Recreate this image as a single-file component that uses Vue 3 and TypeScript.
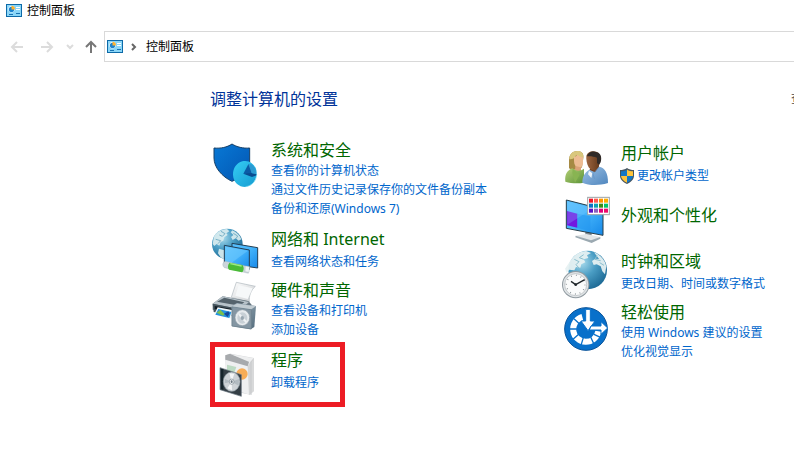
<script setup lang="ts">
interface Category {
  id: string
  title: string
  links: string[]
  view: string
  shielded?: boolean
  marked?: boolean
}

const columns: Category[][] = [
  [
    { id: 'security', title: '系统和安全', view: '15 12 168 168', links: ['查看你的计算机状态', '通过文件历史记录保存你的文件备份副本', '备份和还原(Windows 7)'] },
    { id: 'network', title: '网络和 Internet', view: '15 18 168 168', links: ['查看网络状态和任务'] },
    { id: 'hardware', title: '硬件和声音', view: '15 3 168 168', links: ['查看设备和打印机', '添加设备'] },
    { id: 'programs', title: '程序', view: '15 39 168 168', links: ['卸载程序'], marked: true },
  ],
  [
    { id: 'users', title: '用户帐户', view: '15 6 168 168', links: ['更改帐户类型'], shielded: true },
    { id: 'appearance', title: '外观和个性化', view: '15 9 168 168', links: [] },
    { id: 'clock', title: '时钟和区域', view: '15 6 168 168', links: ['更改日期、时间或数字格式'] },
    { id: 'access', title: '轻松使用', view: '15 3 168 168', links: ['使用 Windows 建议的设置', '优化视觉显示'] },
  ],
]

const swatches = ['#f01425', '#ff5a4f', '#ff9500', '#ffad00', '#0b72c4', '#0aa1b5', '#3c8c16', '#00c46c', '#5a10c8', '#8b62bd', '#e0007c', '#ee0a68']
</script>

<template>
  <div class="window">
    <svg class="defs" aria-hidden="true">
      <defs>
        <symbol id="panel" viewBox="0 0 16 13">
          <rect width="16" height="13" fill="#0d6aa8" />
          <rect x="1" y="1" width="14" height="11" fill="#8ad6f8" />
          <circle cx="5.5" cy="5.2" r="3.1" fill="#fff" />
          <circle cx="5.5" cy="5.4" r="2.6" fill="#1b83cf" />
          <path d="M5.5 5.4V1.8a3.4 3.4 0 0 1 3.4 3.6z" fill="#ffb22e" />
          <path d="M10 3.5h4M10 5.5h4" stroke="#fff" />
          <path d="M3 10.5h4M10 9.5h4" stroke="#1872b2" />
        </symbol>
        <radialGradient id="ocean" cx=".35" cy=".3" r=".8">
          <stop offset="0" stop-color="#aadced" />
          <stop offset=".45" stop-color="#4a9dc4" />
          <stop offset="1" stop-color="#17638f" />
        </radialGradient>
        <linearGradient id="screen" x1="0" y1="0" x2="1" y2="1">
          <stop offset="0" stop-color="#5ac2ff" />
          <stop offset=".5" stop-color="#42b2fa" />
          <stop offset="1" stop-color="#1688e8" />
        </linearGradient>
        <linearGradient id="shield" x1="0" y1="0" x2="1" y2="1">
          <stop offset="0" stop-color="#0879d5" />
          <stop offset="1" stop-color="#0355b2" />
        </linearGradient>
        <linearGradient id="cyan" x1="0" y1="0" x2="1" y2="1">
          <stop offset="0" stop-color="#35cdf5" />
          <stop offset="1" stop-color="#159bd0" />
        </linearGradient>
        <linearGradient id="steel" x1="0" y1="0" x2="1" y2="1">
          <stop offset="0" stop-color="#a4b5c0" />
          <stop offset="1" stop-color="#536b7c" />
        </linearGradient>
        <linearGradient id="paper" x1="0" y1="0" x2="1" y2="1">
          <stop offset="0" stop-color="#ffffff" />
          <stop offset="1" stop-color="#c9cccf" />
        </linearGradient>
        <linearGradient id="green" x1="0" y1="0" x2="1" y2="1">
          <stop offset="0" stop-color="#b4cf76" />
          <stop offset="1" stop-color="#5c9438" />
        </linearGradient>
        <linearGradient id="denim" x1="0" y1="0" x2="1" y2="1">
          <stop offset="0" stop-color="#9bc0e4" />
          <stop offset="1" stop-color="#4f86be" />
        </linearGradient>
        <linearGradient id="skin" x1="0" y1="0" x2="1" y2="0">
          <stop offset="0" stop-color="#9d6641" />
          <stop offset="1" stop-color="#613618" />
        </linearGradient>
      </defs>
    </svg>

    <header class="titlebar">
      <svg class="panel-icon" aria-hidden="true"><use href="#panel" /></svg>
      <span>控制面板</span>
    </header>

    <nav class="toolbar">
      <div class="arrows">
        <button class="arrow" type="button" disabled aria-label="后退">
          <svg viewBox="0 0 14 14"><path d="M13 7H2M7 2 2 7l5 5" /></svg>
        </button>
        <button class="arrow" type="button" disabled aria-label="前进">
          <svg viewBox="0 0 14 14"><path d="M1 7h11M7 2l5 5-5 5" /></svg>
        </button>
        <button class="recent" type="button" disabled aria-label="最近">
          <svg viewBox="0 0 8 8"><path d="m1 2 3 3 3-3" /></svg>
        </button>
        <button class="up" type="button" aria-label="向上">
          <svg viewBox="0 0 14 14"><path d="M7 13V2M2 7l5-5 5 5" /></svg>
        </button>
      </div>
      <div class="address">
        <svg class="panel-icon" aria-hidden="true"><use href="#panel" /></svg>
        <svg class="separator" viewBox="0 0 8 8" aria-hidden="true"><path d="m2 1 3 3-3 3" /></svg>
        <a class="crumb" href="#">控制面板</a>
      </div>
    </nav>

    <main>
      <div class="heading">
        <h1>调整计算机的设置</h1>
        <span class="view-by">查看方式</span>
      </div>
      <div class="columns">
        <ul v-for="(column, index) in columns" :key="index" class="column">
          <li
            v-for="item in column"
            :key="item.id"
            class="category"
            :class="{ single: item.links.length === 1, solo: item.links.length === 0, marked: item.marked }"
          >
            <svg class="icon" :viewBox="item.view" aria-hidden="true">
              <g v-if="item.id === 'security'">
                <path d="M81 27c14 9 34 14 53 12v44c0 25-23 43-53 56-30-14-54-42-54-70V39c20 2 39-2 54-12z" fill="url(#shield)" stroke="#173f66" stroke-width="3" />
                <path d="M112 79c20-6 42 10 43 34 1 23-15 41-34 43-20 0-36-15-37-37 0-20 11-35 28-40z" fill="url(#cyan)" />
                <path d="m130 88-15 28 25 2V92z" fill="#0a5ba6" />
                <path d="m130 88 10 26 13 3c0-12-5-23-13-29z" fill="#2b9ad2" />
                <path d="m115 116 23-2 17 4v3l-14 5z" fill="#084c91" />
                <path d="M121 155c18-2 33-15 34-37" fill="none" stroke="#78dcf3" stroke-width="2" />
              </g>

              <g v-else-if="item.id === 'network'">
                <circle cx="67" cy="66" r="46" fill="url(#ocean)" />
                <path d="M27 44c8-14 22-21 39-23l7 7-9 6 4 5-10 7-3 10-8 4-4 11-8-5-7 6-5-6 2-12zM42 80l16 5 7 10-8 17-10-6-8-12zM82 25c14 6 22 14 27 27l-8 4-9-7-9 5-5-9 7-6-8-8z" fill="#dcedf0" opacity=".9" />
                <path d="m48 28 12 7-8 8-9-4M32 52l15 4-8 9M85 34l13 8-5 8" fill="none" stroke="#79b1c6" stroke-width="3" />
                <path d="m81 64 77 13v61l-77-11z" fill="url(#screen)" stroke="#223d52" stroke-width="3" />
                <path d="m58 70 75 14v58l-75-17z" fill="url(#screen)" stroke="#223d52" stroke-width="3" />
                <path d="m61 74 68 12-50 37-18-4z" fill="#86d6ff" opacity=".38" />
                <path d="m61 118 70 16-1 20-72-17c-7-6-6-16 3-19z" fill="#cbd5da" stroke="#9aaab3" />
                <path d="m74 122 38 7c6 5 5 18-1 22l-39-8c-5-5-4-16 2-21z" fill="#4abb37" />
                <path d="m76 125 34 7" stroke="#9eea85" stroke-width="4" />
                <path d="m121 132 13 2-2 17-12-2z" fill="#eef3f5" stroke="#9eacb4" />
              </g>

              <g v-else-if="item.id === 'hardware'">
                <path d="m94 13 57 12c-13 11-20 30-18 47L79 58z" fill="url(#paper)" stroke="#aeb7bd" stroke-width="2" />
                <path d="m101 22 42 9-15 32-37-10z" fill="#f6f8f9" />
                <path d="m53 55 77 14 10 11-14 26-103-11V77z" fill="#65747e" />
                <path d="m53 55 79 17-25 22-84-17z" fill="#b7c2c9" />
                <path d="m58 59 60 14-14 10-68-12z" fill="#55636c" />
                <path d="m23 77 84 17v26l-81-18z" fill="#46545d" />
                <path d="m29 84 65 11v11l-65-13z" fill="#101a23" />
                <path d="m38 88 47 9-8 25-49-13z" fill="#eef7fb" />
                <path d="m40 93 39 9-6 18-42-10z" fill="#2393df" />
                <path d="m35 104 11-9 13 14-5 4z" fill="#7bc04b" />
                <path d="m57 107 13-7 4 6-6 11z" fill="#164a9c" />
                <path d="m80 84 16-9 57 9-5 63-11 7-57-9z" fill="url(#steel)" />
                <path d="m81 86 58 9v58l-58-9z" fill="#8496a3" stroke="#6b7e8b" stroke-width="2" />
                <path d="m80 85 17-8 56 8-14 9z" fill="#c2ccd2" />
                <ellipse cx="112" cy="119" rx="22" ry="24" fill="#e7ebee" stroke="#8c9aa4" stroke-width="2" />
                <ellipse cx="112" cy="120" rx="15" ry="17" fill="#c8d0d6" />
                <path d="m102 108 10 12 12 12" fill="none" stroke="#eef1f3" stroke-width="6" />
                <ellipse cx="112" cy="120" rx="5" ry="6" fill="#98a6b0" />
              </g>

              <g v-else-if="item.id === 'programs'">
                <path d="m61 58 16-5 70 13-7 12v99l-76-16z" fill="#d3d5d7" />
                <path d="m62 61 74 18v98l-74-25z" fill="#eff0f1" />
                <path d="m61 58 14-5 58 22-5 16-67-20z" fill="#a7aaad" />
                <path d="m76 54 70 13-11 12z" fill="#eeeff0" />
                <path d="m128 90 8-12 11-12v100l-15 12z" fill="#c7c9cb" opacity=".7" />
                <path d="m66 86 28 7-17 48-11-5z" fill="#bddbc4" />
                <circle cx="111" cy="114" r="17" fill="#f7ad57" />
                <path d="m45 95 64 21v65l-64-20z" fill="#343e45" stroke="#697782" stroke-width="2" />
                <path d="m48 98 7 2v61l-7-2z" fill="#16242b" />
                <ellipse cx="80" cy="137" rx="25" ry="29" fill="#cdd2d6" stroke="#909da5" stroke-width="2" />
                <path d="m80 137-7-25 15 1zM80 137l-13 20 14 6z" fill="#f4f6f7" />
                <path d="m80 137 22-8-1 20zM80 137l-20-8-1 13z" fill="#b2bbc1" />
                <ellipse cx="80" cy="137" rx="7" ry="8" fill="#edf0f2" stroke="#7d8991" stroke-width="2" />
                <ellipse cx="80" cy="137" rx="3" ry="4" fill="#6a7780" />
              </g>

              <g v-else-if="item.id === 'users'">
                <path d="M42 85V61c0-16 9-28 25-28 14 0 20 9 18 22l-4 27c-12 10-28 9-39 3z" fill="#a68a43" />
                <path d="M43 58c0-15 10-25 24-25 13 0 19 8 18 20-11 1-17-3-22-9-1 10-10 13-20 14z" fill="#d9c77d" />
                <path d="M57 51c5-1 8-4 10-7 5 5 10 7 17 8v19c-3 11-8 14-14 13-8-2-13-10-13-21z" fill="#edbc93" />
                <path d="m61 78 17 4v17l-18-4z" fill="#dca379" />
                <path d="M31 125c-2-21 5-34 21-40 10 9 25 9 35 1v42c-19 3-39 2-56-3z" fill="url(#green)" />
                <path d="m53 86 21 18-14 24-8-29z" fill="#88b452" />
                <path d="m107 79 24-7 1 26-30-1z" fill="#744021" />
                <path d="M94 47c3-9 12-14 21-13 17 1 24 11 21 27l-6 24c-7 10-22 7-29-3-6-11-8-25-7-35z" fill="url(#skin)" />
                <path d="M96 49c2-10 12-15 23-14 17 2 23 14 18 32l-5 7-6-5v-16c-9-3-18-5-30-4z" fill="#302a27" />
                <path d="m103 89 17 8 12-17c18 3 27 18 27 49-31 9-58 7-77-1 0-17 6-30 21-39z" fill="url(#denim)" />
                <path d="m102 92 10 8-3 14-10-11z" fill="#eff5fa" />
                <path d="m132 82-18 19 4 15" fill="none" stroke="#5f90c4" stroke-width="2" />
              </g>

              <g v-else-if="item.id === 'appearance'">
                <path d="m91 118 19 5v18l-19-2z" fill="#78858d" />
                <path d="m62 137 32-5 42 9-27 14z" fill="#e2e6e8" />
                <path d="m62 137 46 14 28-10v5l-26 13-49-17z" fill="#9ba9b1" />
                <path d="m34 30 110 28v78L34 115z" fill="url(#screen)" stroke="#253d4a" stroke-width="3" />
                <path d="m36 63 31 8v42l-31-7z" fill="#7216e0" />
                <path d="m67 71 39 8v44l-39-9z" fill="#2296ef" opacity=".55" />
                <path d="m37 34 69 18-1 9-68 43z" fill="#8bd0ff" opacity=".25" />
                <rect x="98" y="22" width="65" height="52" fill="#fff" stroke="#9ca3a7" stroke-width="3" />
                <rect v-for="(color, n) in swatches" :key="color" :x="102 + (n % 4) * 15" :y="26 + Math.floor(n / 4) * 15" width="12" height="12" :fill="color" />
              </g>

              <g v-else-if="item.id === 'clock'">
                <circle cx="98" cy="66" r="58" fill="url(#ocean)" />
                <path d="M47 37c12-18 27-26 46-28l15 6-12 7 4 8-14 4 5 9-12 6-3 10-13-2-5 10-15-2-8 9-5-12zM117 13c18 7 32 20 37 42l-4 24-8-9-5-15-12-6-9 2-5-12 10-7 11 1-6-8z" fill="#e7f1f2" opacity=".94" />
                <path d="m58 34 14 7-9 9 9 10M86 20l-13 9 13 5M126 22l-6 12 17 4M134 44l13 8" fill="none" stroke="#8bbfce" stroke-width="3" />
                <circle cx="62" cy="110" r="41" fill="#909aa0" />
                <circle cx="62" cy="110" r="38" fill="#e0e4e6" />
                <circle cx="62" cy="110" r="33" fill="#fafbfb" stroke="#adb4b8" stroke-width="2" />
                <circle cx="62" cy="110" r="28" fill="none" stroke="#667177" stroke-width="4" stroke-dasharray="2 12.66" />
                <path d="M62 110 48 100M62 110l27-15" stroke="#20272b" stroke-width="4" />
                <circle cx="62" cy="110" r="4" fill="#20272b" />
              </g>

              <g v-else>
                <circle cx="93" cy="87" r="64" fill="#0870ca" stroke="#075198" stroke-width="3" />
                <path d="M82 51A38 38 0 1 0 130 94" fill="none" stroke="#fff" stroke-width="18" />
                <path d="m44 87 24 0M54 118l18-16M78 136l7-23M117 133l-10-22M138 113l-21-10M57 56l16 15" stroke="#0870ca" stroke-width="4" />
                <path d="M92 28h14v35h14L99 92 78 63h14z" fill="#fff" stroke="#0870ca" stroke-width="3" />
                <path d="M108 78h30V65l20 19-20 19V90h-35z" fill="#fff" stroke="#0870ca" stroke-width="3" />
              </g>
            </svg>
            <div class="details">
              <h2><a href="#">{{ item.title }}</a></h2>
              <div v-if="item.links.length" class="links">
                <a v-for="link in item.links" :key="link" href="#">
                  <svg v-if="item.shielded" class="uac" viewBox="0 0 16 16" aria-hidden="true">
                    <path d="M8 0c2 1.500 4.500 2 7 2v5.500c0 4-3 6.500-7 8.500-4-2-7-4.500-7-8.500V2c2.500 0 5-.500 7-2z" fill="#45545f" />
                    <path d="M8 1.500C6 3 4 3.300 2 3.300V8h6z" fill="#1476c5" />
                    <path d="M8 1.500c2 1.500 4 1.800 6 1.800V8H8z" fill="#ffc33b" />
                    <path d="M2 8h6v6.800C4.500 13 2.300 11 2 8z" fill="#ffc33b" />
                    <path d="M8 8h6c-.300 3-2.500 5-6 6.800z" fill="#1476c5" />
                  </svg>{{ link }}
                </a>
              </div>
            </div>
          </li>
        </ul>
      </div>
    </main>
  </div>
</template>

<style>
body {
  margin: 0;
  background: #fff;
}
</style>

<style scoped>
.window {
  min-height: 100vh;
  overflow: hidden;
  color: #000;
  font: 12px/20px "Noto Sans", "Noto Sans CJK SC", sans-serif;
}
.defs {
  position: absolute;
  width: 0;
  height: 0;
}
.panel-icon {
  width: 16px;
  height: 13px;
  flex: none;
}
.titlebar {
  display: flex;
  align-items: center;
  gap: 5px;
  padding: 0 6px;
  height: 21px;
}
.toolbar {
  display: flex;
  margin-top: 10px;
}
.arrows {
  display: flex;
  align-items: center;
  width: 104px;
  flex: none;
  box-sizing: border-box;
  padding-left: 10px;
}
button {
  display: flex;
  padding: 0;
  border: 0;
  background: none;
}
button svg {
  width: 14px;
  height: 14px;
  fill: none;
  stroke: #dcdcdc;
  stroke-width: 2;
}
.arrow {
  margin-right: 16px;
}
.arrow + .recent {
  margin-left: -4px;
}
.recent svg {
  width: 8px;
  height: 8px;
}
.up {
  margin-left: 10px;
}
.up svg {
  stroke: #777;
}
.address {
  display: flex;
  flex: 1;
  align-items: center;
  height: 29px;
  padding-left: 2px;
  border: 1px solid #d9d9d9;
  border-right: 0;
}
.separator {
  width: 8px;
  height: 8px;
  margin: 0 8px 0 7px;
  fill: none;
  stroke: #666;
  stroke-width: 2;
}
a {
  color: #0066cc;
  text-decoration: none;
}
a.crumb {
  color: #000;
}
.heading {
  display: flex;
  justify-content: space-between;
  align-items: center;
  margin-top: 25px;
  padding-left: 210px;
  line-height: 24px;
}
h1,
h2 {
  margin: 0;
  font-size: 16px;
  font-weight: 400;
}
h1 {
  color: #003399;
}
.view-by {
  width: 3px;
  white-space: nowrap;
  color: #444;
}
.columns {
  display: grid;
  grid-template-columns: 350px 1fr;
  margin-top: 28px;
  padding-left: 210px;
}
.column {
  display: flex;
  flex-direction: column;
  gap: 10px;
  margin: 0;
  padding: 0;
  list-style: none;
}
.column + .column {
  padding-top: 3px;
}
.category {
  position: relative;
  display: flex;
  align-items: flex-start;
  gap: 5px;
}
.icon {
  width: 56px;
  height: 56px;
  flex: none;
  margin-bottom: -16px;
}
h2 {
  line-height: 22px;
}
h2 a {
  color: #006600;
}
.details {
  white-space: nowrap;
}
.links a {
  display: flex;
  align-items: center;
  line-height: 19px;
}
.single .links {
  margin: 2px 0 -2px;
}
.solo {
  min-height: 47px;
}
.solo .details {
  padding-top: 11px;
}
.uac {
  width: 16px;
  height: 16px;
  margin: 0 2px 0 -2px;
}
.marked::after {
  content: "";
  position: absolute;
  top: -7px;
  left: 0;
  box-sizing: border-box;
  width: 135px;
  height: 65px;
  border: 5px solid #ed1c24;
  pointer-events: none;
}
</style>
